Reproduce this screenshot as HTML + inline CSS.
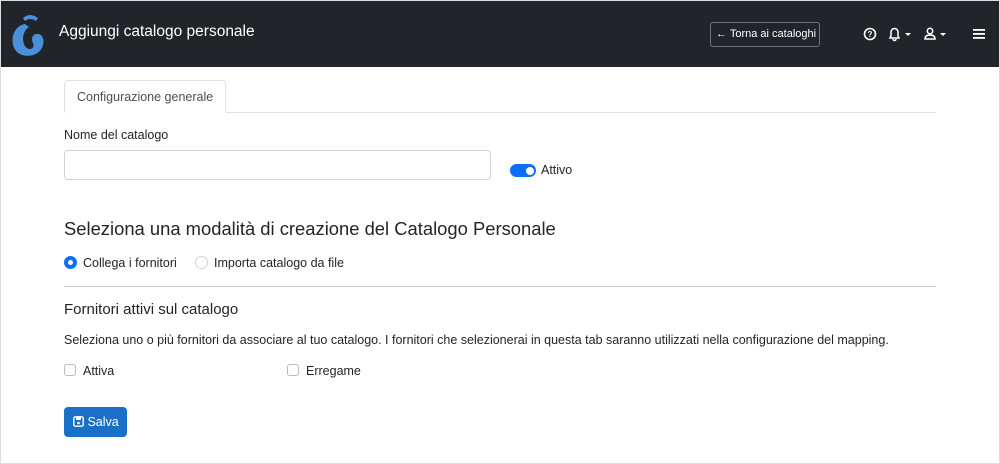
<!DOCTYPE html>
<html><head><meta charset="utf-8"><style>
*{box-sizing:border-box}
body{margin:0;width:1000px;height:464px;background:#fff;font-family:"Liberation Sans",sans-serif;color:#212529;position:relative;overflow:hidden}
.frame{position:absolute;left:0;top:0;width:1000px;height:464px;border:1px solid #ddd;pointer-events:none;z-index:5}
.nav{position:absolute;left:0;top:0;width:1000px;height:67px;background:#212529}
.abs{position:absolute;white-space:nowrap}
.t13{font-size:12.5px}
</style></head><body>
<div class="frame"></div>
<div class="nav">
<svg class="abs" style="left:8px;top:10px" width="40" height="48" viewBox="0 0 40 48"><path d="M17 14 C5 16 1 32 8 41 C15 49 32 47 35 35 C37 28 33 23 28 24 C24 25 23 29 25 33 C27 37 23 41 19 38 C13 34 14 21 21 17 Z" fill="#4a90d9"/><path d="M15 8 Q22 2 30 8 L28 11 Q22 7 17 11Z" fill="#4a90d9"/></svg>
<div class="abs" style="left:59px;top:23px;color:#fff;font-size:15.5px">Aggiungi catalogo personale</div>
<div class="abs" style="left:710px;top:22px;width:110px;height:25px;border:1px solid #6c757d;border-radius:3px;color:#fff;font-size:11px;line-height:23px;padding-left:5px">← Torna ai cataloghi</div>
<svg class="abs" style="left:863px;top:27px" width="14" height="14" viewBox="0 0 14 14"><circle cx="7" cy="7" r="5.5" fill="none" stroke="#fff" stroke-width="1.6"/><text x="7" y="10" font-size="8" fill="#fff" text-anchor="middle" font-family="Liberation Sans" font-weight="bold">?</text></svg>
<svg class="abs" style="left:887px;top:26px" width="28" height="16" viewBox="0 0 28 16"><path d="M3 12 L4 10 V6 A3.5 3.5 0 0 1 11 6 V10 L12 12 Z M6 13 A1.5 1.5 0 0 0 9 13" fill="none" stroke="#fff" stroke-width="1.5"/><path d="M18 7 L24 7 L21 10Z" fill="#fff"/></svg>
<svg class="abs" style="left:923px;top:26px" width="28" height="16" viewBox="0 0 28 16"><circle cx="7" cy="5" r="2.7" fill="none" stroke="#fff" stroke-width="1.5"/><path d="M2 13 Q2 9 7 9 Q12 9 12 13 Z" fill="none" stroke="#fff" stroke-width="1.5"/><path d="M17 7 L23 7 L20 10Z" fill="#fff"/></svg>
<svg class="abs" style="left:973px;top:28px" width="13" height="12"><rect y="1" width="12" height="1.8" fill="#fff"/><rect y="5" width="12" height="1.8" fill="#fff"/><rect y="9" width="12" height="1.8" fill="#fff"/></svg>
</div>
<div class="abs" style="left:64px;top:80px;width:162px;height:33px;border:1px solid #dee2e6;border-bottom-color:#fff;border-radius:4px 4px 0 0;background:#fff;z-index:1"></div>
<div class="abs t13" style="left:77px;top:90px;z-index:2;color:#495057">Configurazione generale</div>
<div class="abs" style="left:64px;top:112px;width:872px;height:1px;background:#dee2e6"></div>
<div class="abs t13" style="left:64px;top:128px">Nome del catalogo</div>
<div class="abs" style="left:64px;top:150px;width:427px;height:30px;border:1px solid #ced4da;border-radius:4px"></div>
<div class="abs" style="left:510px;top:164px;width:26px;height:13px;background:#0d6efd;border-radius:7px"><div style="position:absolute;right:2px;top:2.5px;width:8px;height:8px;border-radius:50%;background:#fff"></div></div>
<div class="abs t13" style="left:541px;top:163px">Attivo</div>
<div class="abs" style="left:64px;top:218px;font-size:18.4px">Seleziona una modalità di creazione del Catalogo Personale</div>
<div class="abs" style="left:64px;top:256px;width:13px;height:13px;border-radius:50%;background:#0d6efd"><div style="position:absolute;left:4px;top:4px;width:5px;height:5px;border-radius:50%;background:#fff"></div></div>
<div class="abs t13" style="left:83px;top:256px">Collega i fornitori</div>
<div class="abs" style="left:195px;top:256px;width:13px;height:13px;border-radius:50%;border:1px solid #ced4da"></div>
<div class="abs t13" style="left:214px;top:256px">Importa catalogo da file</div>
<div class="abs" style="left:64px;top:286px;width:872px;height:1px;background:#ccc"></div>
<div class="abs" style="left:64px;top:301px;font-size:15px">Fornitori attivi sul catalogo</div>
<div class="abs t13" style="left:64px;top:333px">Seleziona uno o più fornitori da associare al tuo catalogo. I fornitori che selezionerai in questa tab saranno utilizzati nella configurazione del mapping.</div>
<div class="abs" style="left:64px;top:364px;width:12px;height:12px;border:1px solid #bbb;border-radius:3px"></div>
<div class="abs t13" style="left:83px;top:364px">Attiva</div>
<div class="abs" style="left:287px;top:364px;width:12px;height:12px;border:1px solid #bbb;border-radius:3px"></div>
<div class="abs t13" style="left:306px;top:364px">Erregame</div>
<div class="abs t13" style="left:64px;top:407px;width:63px;height:30px;background:#1a6fc9;border-radius:4px;color:#fff;line-height:30px;padding-left:9px"><svg width="11" height="11" viewBox="0 0 11 11" style="vertical-align:-1px"><rect x="0.8" y="0.8" width="9.4" height="9.4" rx="1.5" fill="none" stroke="#fff" stroke-width="1.4"/><rect x="3" y="1" width="5" height="3" fill="#fff"/><circle cx="5.5" cy="7" r="1.3" fill="#fff"/></svg> Salva</div>
</body></html>
